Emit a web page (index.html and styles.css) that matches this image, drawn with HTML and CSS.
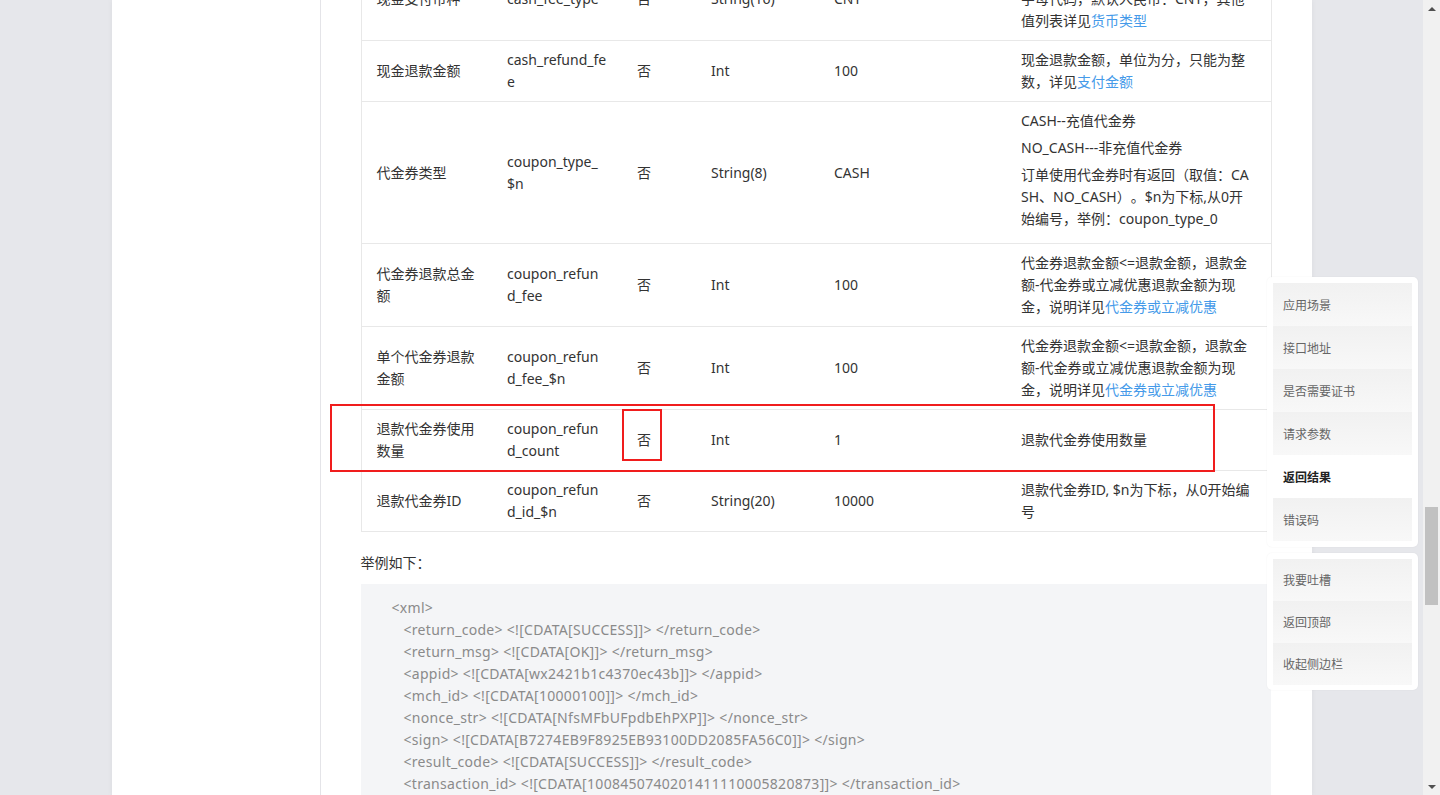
FILE: index.html
```html
<!DOCTYPE html>
<html lang="zh-CN">
<head>
<meta charset="utf-8">
<title>查询退款 - 返回结果</title>
<link rel="stylesheet" href="styles.css">
</head>
<body>
<div class="viewport">
  <div class="stage">
    <div class="page">
      <aside class="leftcol"></aside>
      <main class="content">
        <table class="params">
          <colgroup>
            <col class="c1"><col class="c2"><col class="c3"><col class="c4"><col class="c5"><col class="c6">
          </colgroup>
          <tbody>
            <tr>
              <td>现金支付币种</td>
              <td class="nw">cash_fee_type</td>
              <td>否</td>
              <td>String(16)</td>
              <td>CNY</td>
              <td class="nw">货币类型，符合ISO 4217标准的三位<br>字母代码，默认人民币：CNY，其他<br>值列表详见<a class="link">货币类型</a></td>
            </tr>
            <tr>
              <td>现金退款金额</td>
              <td class="nw">cash_refund_fe<br>e</td>
              <td>否</td>
              <td>Int</td>
              <td>100</td>
              <td class="nw">现金退款金额，单位为分，只能为整<br>数，详见<a class="link">支付金额</a></td>
            </tr>
            <tr>
              <td>代金券类型</td>
              <td class="nw">coupon_type_<br>$n</td>
              <td>否</td>
              <td>String(8)</td>
              <td>CASH</td>
              <td class="nw desc">
                <p>CASH--充值代金券</p>
                <p>NO_CASH---非充值代金券</p>
                <p>订单使用代金券时有返回（取值：CA<br>SH、NO_CASH）。$n为下标,从0开<br>始编号，举例：coupon_type_0</p>
              </td>
            </tr>
            <tr>
              <td>代金券退款总金额</td>
              <td class="nw">coupon_refun<br>d_fee</td>
              <td>否</td>
              <td>Int</td>
              <td>100</td>
              <td class="nw">代金券退款金额&lt;=退款金额，退款金<br>额-代金券或立减优惠退款金额为现<br>金，说明详见<a class="link">代金券或立减优惠</a></td>
            </tr>
            <tr>
              <td>单个代金券退款金额</td>
              <td class="nw">coupon_refun<br>d_fee_$n</td>
              <td>否</td>
              <td>Int</td>
              <td>100</td>
              <td class="nw">代金券退款金额&lt;=退款金额，退款金<br>额-代金券或立减优惠退款金额为现<br>金，说明详见<a class="link">代金券或立减优惠</a></td>
            </tr>
            <tr>
              <td>退款代金券使用数量</td>
              <td class="nw">coupon_refun<br>d_count</td>
              <td>否</td>
              <td>Int</td>
              <td>1</td>
              <td class="nw">退款代金券使用数量</td>
            </tr>
            <tr>
              <td>退款代金券ID</td>
              <td class="nw">coupon_refun<br>d_id_$n</td>
              <td>否</td>
              <td>String(20)</td>
              <td>10000</td>
              <td class="nw">退款代金券ID, $n为下标，从0开始编<br>号</td>
            </tr>
          </tbody>
        </table>

        <p class="lead">举例如下：</p>

        <div class="code">
          <div class="ln">&lt;xml&gt;</div>
          <div class="ln in">&lt;return_code&gt; &lt;![CDATA[SUCCESS]]&gt; &lt;/return_code&gt;</div>
          <div class="ln in">&lt;return_msg&gt; &lt;![CDATA[OK]]&gt; &lt;/return_msg&gt;</div>
          <div class="ln in">&lt;appid&gt; &lt;![CDATA[wx2421b1c4370ec43b]]&gt; &lt;/appid&gt;</div>
          <div class="ln in">&lt;mch_id&gt; &lt;![CDATA[10000100]]&gt; &lt;/mch_id&gt;</div>
          <div class="ln in">&lt;nonce_str&gt; &lt;![CDATA[NfsMFbUFpdbEhPXP]]&gt; &lt;/nonce_str&gt;</div>
          <div class="ln in">&lt;sign&gt; &lt;![CDATA[B7274EB9F8925EB93100DD2085FA56C0]]&gt; &lt;/sign&gt;</div>
          <div class="ln in">&lt;result_code&gt; &lt;![CDATA[SUCCESS]]&gt; &lt;/result_code&gt;</div>
          <div class="ln in">&lt;transaction_id&gt; &lt;![CDATA[1008450740201411110005820873]]&gt; &lt;/transaction_id&gt;</div>
          <div class="ln in">&lt;out_trade_no&gt; &lt;![CDATA[1415757673]]&gt; &lt;/out_trade_no&gt;</div>
          <div class="ln in">&lt;out_refund_no_0&gt; &lt;![CDATA[1415701182]]&gt; &lt;/out_refund_no_0&gt;</div>
          <div class="ln">&lt;/xml&gt;</div>
        </div>
      </main>
    </div>

    <div class="mark mark-row"></div>
    <div class="mark mark-cell"></div>

    <nav class="sidenav">
      <ul class="navbox">
        <li class="navitem">应用场景</li>
        <li class="navitem">接口地址</li>
        <li class="navitem">是否需要证书</li>
        <li class="navitem">请求参数</li>
        <li class="navitem active">返回结果</li>
        <li class="navitem">错误码</li>
      </ul>
      <ul class="navbox tools">
        <li class="navitem">我要吐槽</li>
        <li class="navitem">返回顶部</li>
        <li class="navitem">收起侧边栏</li>
      </ul>
    </nav>
  </div>

  <div class="scrollbar">
    <div class="sb-btn"><span class="arrow up"></span></div>
    <div class="sb-track">
      <div class="sb-space"></div>
      <div class="sb-thumb"></div>
    </div>
    <div class="sb-btn"><span class="arrow down"></span></div>
  </div>
</div>
</body>
</html>
```

FILE: styles.css
```css
* { box-sizing: border-box; }

html, body {
  margin: 0;
  padding: 0;
  height: 795px;
  overflow: hidden;
}

body {
  background: #e6e7eb;
  font-family: "Noto Sans", "Noto Sans CJK SC", sans-serif;
  font-size: 14px;
  color: #333;
  text-spacing-trim: space-all;
}

.viewport {
  display: flex;
  height: 795px;
}

.stage {
  flex: 1;
  position: relative;
  height: 795px;
  overflow: hidden;
}

.page {
  width: 1200px;
  height: 795px;
  margin: 0 auto;
  background: #fff;
  display: flex;
  box-shadow: 0 0 6px rgba(0, 0, 0, 0.05);
}

.leftcol {
  width: 209px;
  flex: none;
  border-right: 1px solid #e4e4e8;
}

.content {
  flex: 1;
  padding: 0 41px 0 40px;
  min-width: 0;
}

/* table */
.params {
  width: 100%;
  border-collapse: collapse;
  table-layout: fixed;
  border: 1px solid #e8e8e8;
  margin-top: -43px;
}

.c1 { width: 131px; }
.c2 { width: 130px; }
.c3 { width: 74px; }
.c4 { width: 123px; }
.c5 { width: 187px; }
.c6 { width: 265px; }

.params td {
  padding: 8px 15px;
  border-bottom: 1px solid #e8e8e8;
  line-height: 22px;
  vertical-align: middle;
  color: #333;
  word-break: break-all;
}

.params td.nw { white-space: nowrap; }

.desc p {
  margin: 0 0 5px;
}

.link {
  color: #459ae9;
  text-decoration: none;
}

.lead {
  margin: 20px 0 10px;
  line-height: 22px;
  color: #333;
}

.code {
  background: #f4f5f7;
  padding: 13px 31px;
  color: #8a8a8a;
  line-height: 22px;
  white-space: nowrap;
  letter-spacing: 0.3px;
}

.code .in { padding-left: 12px; }

/* annotations */
.mark {
  position: absolute;
  border: 2px solid #f01d1d;
}

.mark-row {
  left: 330px;
  top: 404px;
  width: 885px;
  height: 68px;
}

.mark-cell {
  left: 622px;
  top: 409px;
  width: 40px;
  height: 52px;
}

/* floating side nav */
.sidenav {
  position: absolute;
  left: 1267px;
  top: 277px;
  width: 151px;
  display: flex;
  flex-direction: column;
  gap: 6px;
}

.navbox {
  list-style: none;
  margin: 0;
  padding: 6px;
  background: #fff;
  border-radius: 5px;
  box-shadow: 0 0 2px rgba(0, 0, 0, 0.06);
}

.navbox.tools { padding: 6px 6px 5px; }

.navitem {
  height: 43px;
  padding-left: 10px;
  display: flex;
  align-items: center;
  font-size: 12px;
  color: #666;
  background: linear-gradient(#f1f1f1, #f8f8f8);
}

.tools .navitem { height: 42px; }

.navitem.active {
  background: #fff;
  color: #222;
  font-weight: bold;
}

/* fake scrollbar */
.scrollbar {
  width: 17px;
  flex: none;
  background: #f1f1f1;
  display: flex;
  flex-direction: column;
}

.sb-btn {
  height: 17px;
  display: flex;
  align-items: center;
  justify-content: center;
}

.arrow {
  width: 0;
  height: 0;
  border-left: 4px solid transparent;
  border-right: 4px solid transparent;
}

.arrow.up { border-bottom: 4px solid #505050; }
.arrow.down { border-top: 4px solid #505050; }

.sb-track {
  flex: 1;
  display: flex;
  flex-direction: column;
  padding: 0 2px;
}

.sb-space { height: 490px; }

.sb-thumb {
  height: 98px;
  background: #c1c1c1;
}
```
